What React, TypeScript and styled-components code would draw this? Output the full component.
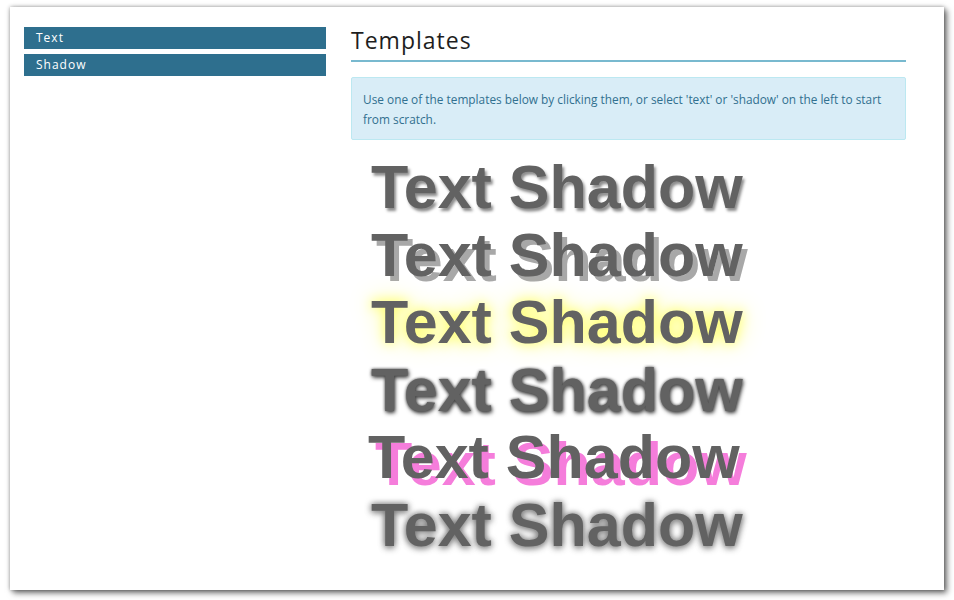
import styled, { createGlobalStyle } from "styled-components";

const GlobalStyle = createGlobalStyle`
  html, body {
    margin: 0;
    padding: 0;
    background: #ffffff;
  }
  body {
    font-family: "Open Sans", "Liberation Sans", sans-serif;
  }
`;

const Page = styled.div`
  padding: 7px 10px 10px 10px;
`;

const Panel = styled.div`
  width: 934px;
  height: 583px;
  box-sizing: border-box;
  background: #ffffff;
  box-shadow: 3px 3px 6px rgba(0, 0, 0, 0.55), 0 0 4px rgba(0, 0, 0, 0.35);
  display: flex;
  gap: 25px;
  padding: 20px 38px 0 14px;
`;

const Sidebar = styled.nav`
  width: 302px;
  flex-shrink: 0;
  display: flex;
  flex-direction: column;
  gap: 5px;
`;

const NavButton = styled.div`
  height: 22px;
  line-height: 22px;
  background: #2e6f8e;
  color: #ffffff;
  padding-left: 12px;
  font-family: "Open Sans", sans-serif;
  font-size: 12px;
  letter-spacing: 1px;
  cursor: pointer;
`;

const Main = styled.main`
  flex: 1;
  min-width: 0;
`;

const Heading = styled.h2`
  margin: 0;
  font-family: "Open Sans", sans-serif;
  font-weight: normal;
  font-size: 23px;
  letter-spacing: 1px;
  color: #1e1e1e;
  line-height: 26px;
  padding-bottom: 7px;
  border-bottom: 2px solid #78b9cf;
`;

const Alert = styled.div`
  margin-top: 15px;
  background: #d9edf7;
  border: 1px solid #bce8f1;
  border-radius: 2px;
  color: #31708f;
  padding: 11px 12px 10px 11px;
  font-family: "Open Sans", sans-serif;
  font-size: 11.85px;
  line-height: 20px;
`;

const Templates = styled.div`
  margin-top: 14px;
  padding-left: 20px;
  display: flex;
  flex-direction: column;
`;

const Sample = styled.div<{ $shadow: string; $shift?: number }>`
  font-family: "Liberation Sans", Arial, sans-serif;
  font-weight: bold;
  font-size: 61px;
  line-height: 67.5px;
  color: #626262;
  white-space: nowrap;
  cursor: pointer;
  margin-left: ${(p) => p.$shift ?? 0}px;
  text-shadow: ${(p) => p.$shadow};
`;

const samples: { shadow: string; shift?: number }[] = [
  { shadow: "2px 3px 3px rgba(0, 0, 0, 0.45)" },
  { shadow: "5px 5px 0 #a8a8a8" },
  { shadow: "0 0 12px #ffff60, 0 0 24px #ffff90" },
  { shadow: "1px 2px 4px #444, 0 0 3px #555" },
  { shadow: "7px 7px 0 #f57ddb", shift: -3 },
  { shadow: "0 0 6px #777, 0 2px 7px #999" },
];

export default function App() {
  return (
    <>
      <GlobalStyle />
      <Page>
        <Panel>
          <Sidebar>
            <NavButton>Text</NavButton>
            <NavButton>Shadow</NavButton>
          </Sidebar>
          <Main>
            <Heading>Templates</Heading>
            <Alert>
              Use one of the templates below by clicking them, or select 'text' or 'shadow' on the left to start
              from scratch.
            </Alert>
            <Templates>
              {samples.map((s, i) => (
                <Sample key={i} $shadow={s.shadow} $shift={s.shift}>
                  Text Shadow
                </Sample>
              ))}
            </Templates>
          </Main>
        </Panel>
      </Page>
    </>
  );
}
